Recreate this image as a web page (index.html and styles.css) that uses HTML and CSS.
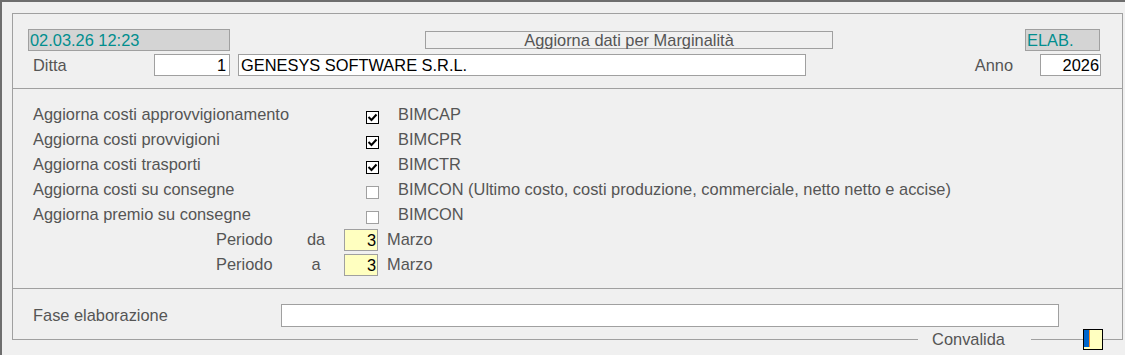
FILE: index.html
```html
<!DOCTYPE html>
<html lang="it">
<head>
    <meta charset="UTF-8">
    <title>Aggiorna dati per Marginalità</title>
    <link rel="stylesheet" href="styles.css">
</head>
<body>
    <div class="frame">
        <div class="panel">
            <div class="head">
                <div class="head-row">
                    <div class="box info ts">02.03.26 12:23</div>
                    <div class="title">Aggiorna dati per Marginalità</div>
                    <div class="box info elab">ELAB.</div>
                </div>
                <div class="head-row second">
                    <div class="lbl-ditta">Ditta</div>
                    <div class="box field num code">1</div>
                    <div class="box field company">GENESYS SOFTWARE S.R.L.</div>
                    <div class="lbl-anno">Anno</div>
                    <div class="box field num year">2026</div>
                </div>
            </div>

            <div class="opts">
                <div class="opt">
                    <div class="opt-label">Aggiorna costi approvvigionamento</div>
                    <span class="check on"><svg viewBox="0 0 11 11" width="11" height="11"><polyline points="1.5,5 4.5,8 9.5,2.5" /></svg></span>
                    <div class="opt-code">BIMCAP</div>
                </div>
                <div class="opt">
                    <div class="opt-label">Aggiorna costi provvigioni</div>
                    <span class="check on"><svg viewBox="0 0 11 11" width="11" height="11"><polyline points="1.5,5 4.5,8 9.5,2.5" /></svg></span>
                    <div class="opt-code">BIMCPR</div>
                </div>
                <div class="opt">
                    <div class="opt-label">Aggiorna costi trasporti</div>
                    <span class="check on"><svg viewBox="0 0 11 11" width="11" height="11"><polyline points="1.5,5 4.5,8 9.5,2.5" /></svg></span>
                    <div class="opt-code">BIMCTR</div>
                </div>
                <div class="opt">
                    <div class="opt-label">Aggiorna costi su consegne</div>
                    <span class="check"></span>
                    <div class="opt-code">BIMCON (Ultimo costo, costi produzione, commerciale, netto netto e accise)</div>
                </div>
                <div class="opt">
                    <div class="opt-label">Aggiorna premio su consegne</div>
                    <span class="check"></span>
                    <div class="opt-code">BIMCON</div>
                </div>
                <div class="period">
                    <div class="period-label">Periodo</div>
                    <div class="period-sel">da</div>
                    <div class="box num month">3</div>
                    <div class="month-name">Marzo</div>
                </div>
                <div class="period">
                    <div class="period-label">Periodo</div>
                    <div class="period-sel">a</div>
                    <div class="box num month">3</div>
                    <div class="month-name">Marzo</div>
                </div>
            </div>

            <div class="phase">
                <div class="phase-label">Fase elaborazione</div>
                <div class="box field phase-input"></div>
            </div>
        </div>
        <div class="footer">
            <span class="rule grow"></span>
            <span class="convalida">Convalida</span>
            <span class="rule mid"></span>
            <span class="state"><span class="state-bar"></span></span>
            <span class="rule end"></span>
        </div>
    </div>
</body>
</html>
```

FILE: styles.css
```css
body {
    margin: 0;
    background-color: #f0f0f0;
    font-family: "Liberation Sans", Arial, sans-serif;
    font-size: 16.4px;
    color: #555555;
}

.frame {
    height: 355px;
    box-sizing: border-box;
    border-top: 2px solid #6e6e6e;
    border-left: 2px solid #6e6e6e;
    padding: 11px 0 0 10px;
}

.panel {
    width: 1111px;
    box-sizing: border-box;
    border: 1px solid #a0a0a0;
    border-bottom: none;
}

/* campi generici */
.box {
    height: 22px;
    box-sizing: border-box;
    border: 1px solid #a0a0a0;
    line-height: 20px;
    white-space: nowrap;
}

.info {
    background-color: #d4d4d4;
    color: #008e8e;
    padding-left: 1px;
}

.field {
    background-color: #ffffff;
    color: #000000;
    padding-left: 2px;
}

.num {
    text-align: right;
    padding-right: 1px;
}

/* testata */
.head {
    padding: 15px 21px 12px 15px;
    border-bottom: 1px solid #a0a0a0;
}

.head-row {
    display: flex;
    align-items: center;
    height: 22px;
}

.head-row.second {
    margin-top: 3px;
}

.ts {
    width: 202px;
}

.title {
    margin-left: 195px;
    width: 408px;
    height: 18px;
    box-sizing: border-box;
    border: 1px solid #a0a0a0;
    line-height: 16px;
    text-align: center;
}

.elab {
    margin-left: 192px;
    width: 75px;
}

.lbl-ditta {
    width: 126px;
    padding-left: 5px;
    box-sizing: border-box;
}

.code {
    width: 76px;
    padding-right: 3px;
}

.company {
    margin-left: 8px;
    width: 568px;
}

.lbl-anno {
    margin-left: auto;
    margin-right: 27px;
}

.year {
    width: 61px;
}

/* opzioni */
.opts {
    padding: 13px 0 11px 20px;
    border-bottom: 1px solid #a0a0a0;
}

.opt,
.period {
    display: flex;
    align-items: center;
    height: 25px;
    line-height: 25px;
}

.opt-label {
    width: 333px;
}

.check {
    width: 13px;
    height: 13px;
    margin-top: 5px;
    box-sizing: border-box;
    border: 1px solid #a0a0a0;
    background-color: #ffffff;
    display: flex;
}

.check.on {
    border-color: #000000;
}

.check svg polyline {
    fill: none;
    stroke: #000000;
    stroke-width: 2;
}

.opt-code {
    margin-left: 19px;
    white-space: nowrap;
}

.period {
    padding-left: 183px;
}

.period-label {
    width: 81px;
}

.period-sel {
    width: 38px;
    text-align: center;
}

.month {
    margin-left: 9px;
    width: 34px;
    background-color: #ffffc0;
    color: #000000;
}

.month-name {
    margin-left: 9px;
}

/* fase */
.phase {
    display: flex;
    align-items: center;
    padding: 15px 0 12px 20px;
}

.phase-label {
    width: 248px;
}

.phase-input {
    width: 778px;
    height: 23px;
}

/* piede */
.footer {
    width: 1111px;
    height: 21px;
    margin-top: -10px;
    display: flex;
    align-items: center;
}

.rule {
    height: 0;
    border-top: 1px solid #a0a0a0;
}

.rule.grow {
    flex: 1;
}

.rule.mid {
    width: 52px;
}

.rule.end {
    width: 20px;
}

.convalida {
    padding: 0 26px 0 14px;
    line-height: 21px;
}

.state {
    width: 20px;
    height: 21px;
    box-sizing: border-box;
    border: 1px solid #000000;
    background-color: #ffffc0;
    padding-bottom: 2px;
    display: flex;
}

.state-bar {
    width: 5px;
    background-color: #0066cc;
    border-right: 1px solid #ff8c1a;
}
```
